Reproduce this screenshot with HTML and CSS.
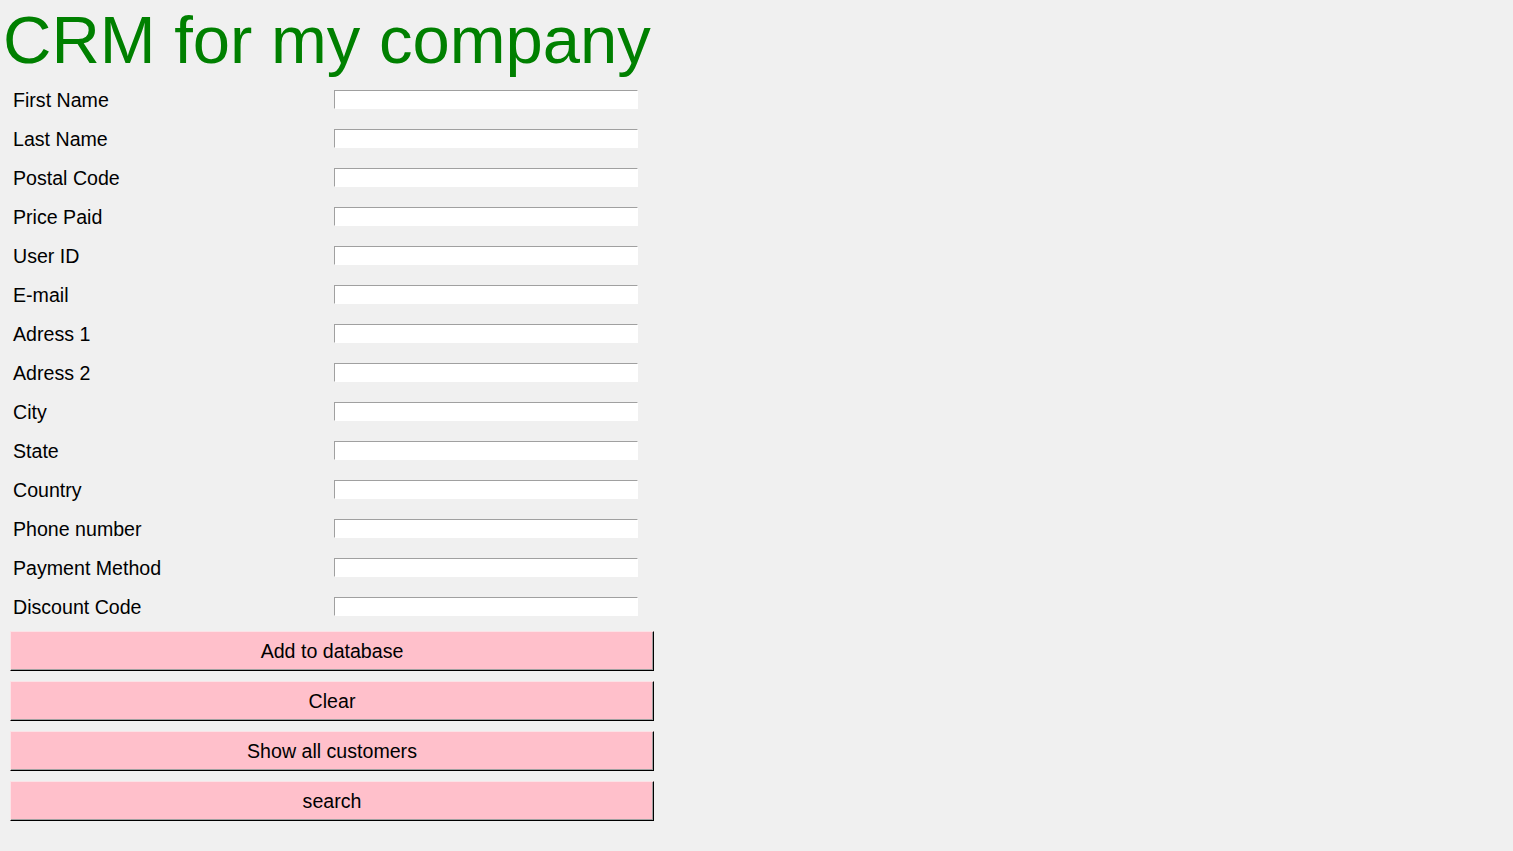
FILE: index.html
```html
<!DOCTYPE html>
<html lang="en">
<head>
<meta charset="utf-8">
<title>CRM for my company</title>
<link rel="stylesheet" href="styles.css">
</head>
<body>
<h1 class="title">CRM for my company</h1>
<form class="form">
  <div class="row"><label class="label">First Name</label><input class="entry" type="text"></div>
  <div class="row"><label class="label">Last Name</label><input class="entry" type="text"></div>
  <div class="row"><label class="label">Postal Code</label><input class="entry" type="text"></div>
  <div class="row"><label class="label">Price Paid</label><input class="entry" type="text"></div>
  <div class="row"><label class="label">User ID</label><input class="entry" type="text"></div>
  <div class="row"><label class="label">E-mail</label><input class="entry" type="text"></div>
  <div class="row"><label class="label">Adress 1</label><input class="entry" type="text"></div>
  <div class="row"><label class="label">Adress 2</label><input class="entry" type="text"></div>
  <div class="row"><label class="label">City</label><input class="entry" type="text"></div>
  <div class="row"><label class="label">State</label><input class="entry" type="text"></div>
  <div class="row"><label class="label">Country</label><input class="entry" type="text"></div>
  <div class="row"><label class="label">Phone number</label><input class="entry" type="text"></div>
  <div class="row"><label class="label">Payment Method</label><input class="entry" type="text"></div>
  <div class="row"><label class="label">Discount Code</label><input class="entry" type="text"></div>
</form>
<div class="buttons">
  <button class="btn" type="button">Add to database</button>
  <button class="btn" type="button">Clear</button>
  <button class="btn" type="button">Show all customers</button>
  <button class="btn" type="button">search</button>
</div>
</body>
</html>
```
FILE: styles.css
```css
html, body {
  margin: 0;
  padding: 0;
  background: #f0f0f0;
  font-family: "Liberation Sans", Arial, sans-serif;
}

.title {
  margin: 0;
  padding-left: 3px;
  font-size: 67px;
  font-weight: normal;
  line-height: 80px;
  height: 80px;
  color: #008000;
  white-space: nowrap;
}

.form {
  margin: 0;
  display: flex;
  flex-direction: column;
}

.row {
  display: flex;
  align-items: center;
  height: 39px;
}

.label {
  width: 321px;
  padding: 2px 0 0 13px;
  font-size: 19.6px;
  color: #000;
}

.entry {
  box-sizing: border-box;
  width: 304px;
  height: 19px;
  margin: 0;
  padding: 0 2px;
  background: #fff;
  border: 1px solid #fff;
  border-top-color: #a0a0a0;
  border-left-color: #a0a0a0;
  font-family: "Liberation Sans", Arial, sans-serif;
  font-size: 15px;
  outline: none;
}

.buttons {
  display: flex;
  flex-direction: column;
  gap: 10px;
  padding: 5px 0 0 10px;
  width: 644px;
}

.btn {
  box-sizing: border-box;
  width: 644px;
  height: 40px;
  margin: 0;
  padding: 0;
  background: #ffc0cb;
  border: 1px solid #000;
  border-top-color: #fbe3e7;
  border-left-color: #fbe3e7;
  box-shadow: inset -1px -1px 0 #a0a0a0;
  font-family: "Liberation Sans", Arial, sans-serif;
  font-size: 19.6px;
  color: #000;
}
```
